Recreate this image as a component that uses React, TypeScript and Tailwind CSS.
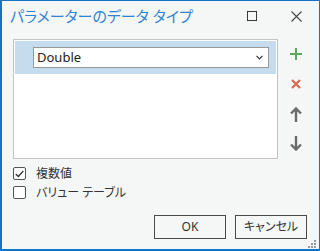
import React from "react";

const font = "[font-family:'Noto_Sans','Noto_Sans_CJK_JP',sans-serif] [font-feature-settings:'palt']";

export default function App() {
  return (
    <div className={`relative w-[320px] h-[251px] bg-[#f5f7f7] border-t border-r border-l-2 border-b-2 border-[#1174c6] flex flex-col ${font}`}>
      {/* Title bar */}
      <div className="h-[29px] flex items-center pl-[8px] pr-[17px]">
        <div className="text-[15px] leading-none text-[#2f84d2] mt-[1px]">パラメーターのデータ タイプ</div>
        <div className="flex-1" />
        <div className="w-[10px] h-[10px] border border-[#3a3a3a] mt-[1px]" />
        <div className="ml-[34px] w-[11px] h-[11px] mt-[1px]">
          <svg width="11" height="11" viewBox="0 0 11 11">
            <path d="M0.5 0.5 L10.5 10.5 M10.5 0.5 L0.5 10.5" stroke="#444" strokeWidth="1.1" fill="none" />
          </svg>
        </div>
      </div>

      {/* Main area */}
      <div className="flex mt-[9px] pl-[11px]">
        <div className="w-[265px] h-[120px] border border-[#c4c4c4] bg-white p-[1px]">
          <div className="h-[33px] bg-[#c5dcef] flex items-center pl-[18px] pr-[7px]">
            <div className="w-[236px] h-[21px] border border-[#999999] bg-white flex items-center pl-[3px] pr-[5px]">
              <span className="text-[13px] text-[#222] leading-none">Double</span>
              <div className="flex-1" />
              <svg width="7" height="5" viewBox="0 0 7 5">
                <path d="M0.5 0.8 L3.5 3.8 L6.5 0.8" stroke="#333" strokeWidth="1.2" fill="none" />
              </svg>
            </div>
          </div>
        </div>
        <div className="w-[36px] flex flex-col items-center pt-[9px]">
          <svg width="12" height="12" viewBox="0 0 12 12">
            <path d="M6 0 V12 M0 6 H12" stroke="#5aa85c" strokeWidth="2" fill="none" />
          </svg>
          <svg className="mt-[19px]" width="10" height="10" viewBox="0 0 10 10">
            <path d="M1 1 L9 9 M9 1 L1 9" stroke="#d8694c" strokeWidth="2.2" fill="none" />
          </svg>
          <svg className="mt-[18px]" width="12" height="15" viewBox="0 0 12 15">
            <path d="M6 1.5 V15 M1 6.5 L6 1.5 L11 6.5" stroke="#6b6b6b" strokeWidth="2.4" fill="none" />
          </svg>
          <svg className="mt-[14px]" width="12" height="15" viewBox="0 0 12 15">
            <path d="M6 0 V13.5 M1 8.5 L6 13.5 L11 8.5" stroke="#6b6b6b" strokeWidth="2.4" fill="none" />
          </svg>
        </div>
      </div>

      {/* Checkboxes */}
      <div className="flex flex-col pl-[11px] mt-[8px] gap-[6px]">
        <div className="flex items-center h-[13px]">
          <div className="w-[13px] h-[13px] border border-[#555] rounded-[2px] bg-white flex items-center justify-center">
            <svg width="9" height="8" viewBox="0 0 9 8">
              <path d="M0.8 4 L3.3 6.5 L8.3 1" stroke="#333" strokeWidth="1.3" fill="none" />
            </svg>
          </div>
          <span className="ml-[10px] text-[12px] leading-none text-[#333]">複数値</span>
        </div>
        <div className="flex items-center h-[13px]">
          <div className="w-[13px] h-[13px] border border-[#555] rounded-[2px] bg-white" />
          <span className="ml-[10px] text-[12px] leading-none text-[#333]">バリュー テーブル</span>
        </div>
      </div>

      {/* Buttons */}
      <div className="flex justify-end pr-[12px] mt-[16px] gap-[9px]">
        <div className="w-[72px] h-[24px] border border-[#4a4a4a] flex items-center justify-center text-[12px] text-[#333]">OK</div>
        <div className="w-[72px] h-[24px] border border-[#4a4a4a] flex items-center justify-center text-[12px] text-[#333]">キャンセル</div>
      </div>

      {/* Resize grip */}
      <svg className="absolute right-[2px] bottom-[0px]" width="9" height="9" viewBox="0 0 9 9">
        <rect x="6" y="0" width="2" height="2" fill="#999" />
        <rect x="3" y="3" width="2" height="2" fill="#999" />
        <rect x="6" y="3" width="2" height="2" fill="#999" />
        <rect x="0" y="6" width="2" height="2" fill="#999" />
        <rect x="3" y="6" width="2" height="2" fill="#999" />
        <rect x="6" y="6" width="2" height="2" fill="#999" />
      </svg>
    </div>
  );
}
